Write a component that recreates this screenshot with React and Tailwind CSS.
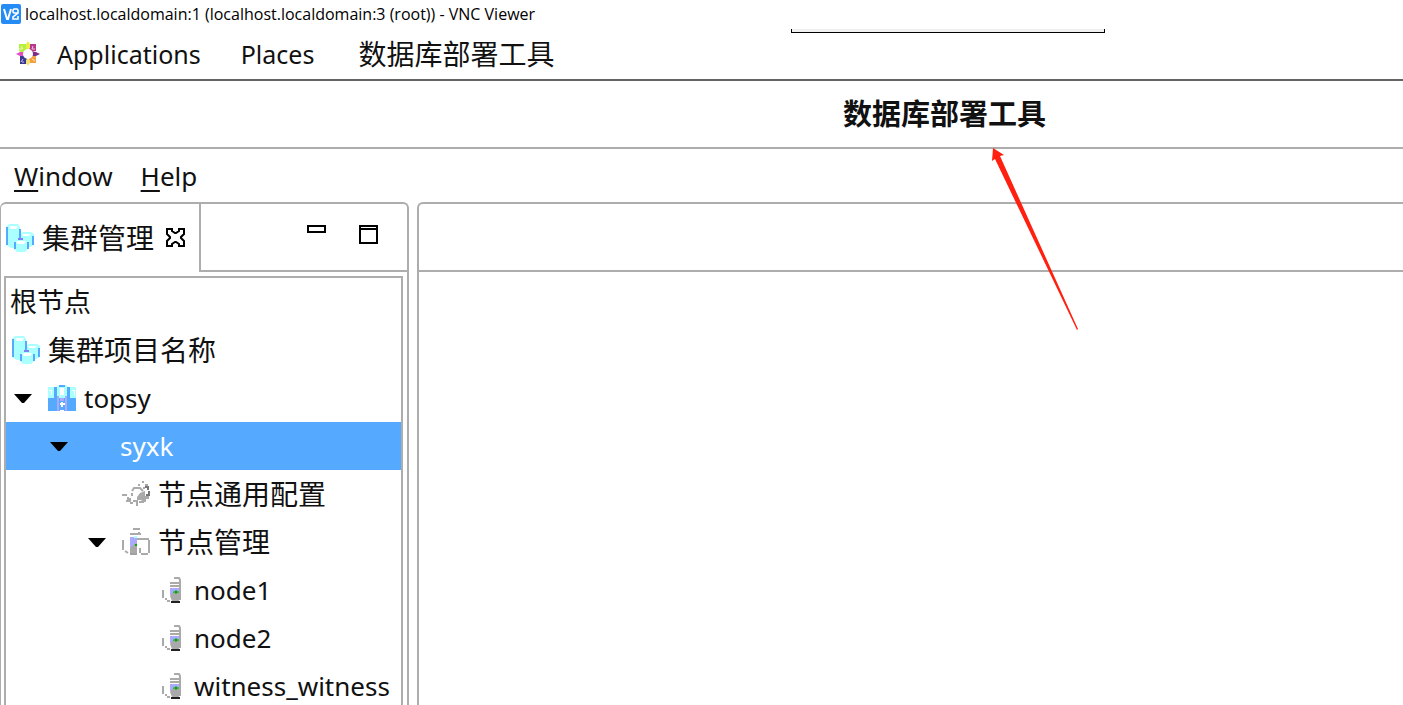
import { useState } from "react";

function VncLogo() {
  return (
    <svg width="20" height="20" viewBox="0 0 20 20" aria-hidden="true">
      <rect width="20" height="20" rx="2" fill="#258cf5" />
      <path d="M3 5l3 10h1l3-10" fill="none" stroke="#fff" strokeWidth="2" />
      <path
        d="M17 9h-4l-1-1V6l1-1h3l1 1v3l-5 4v2h5v-3"
        fill="none"
        stroke="#fff"
        strokeWidth="1.6"
      />
    </svg>
  );
}

function CentosLogo() {
  return (
    <svg width="26" height="26" viewBox="0 0 26 26" aria-hidden="true">
      <path d="M4 3h7l1 5-4 4-4-2z" fill="#b4f03c" />
      <path d="M15 3h6v7l-4 1-4-4z" fill="#b8388c" />
      <path d="M5 15l4-1 4 5-2 4H5z" fill="#3a3a96" />
      <path d="M17 14l4 1v7h-6l-2-4z" fill="#f5a040" />
      <path d="M13 0l2 3v4l-2 2-2-2V3z" fill="#e8f04a" />
      <path d="M25 13l-4 2h-4l-2-2 2-2h4z" fill="#7a3088" />
      <path d="M13 25l-2-3v-3l2-2 2 2v3z" fill="#f8e070" />
      <path d="M1 13l4-2h4l2 2-2 2H5z" fill="#e050c0" />
      <path
        d="M6 5l2 3M4 8h3M18 5l-1 3M20 8h-3M6 21l2-3M20 20l-3-2M8 22v-2"
        stroke="#fff"
        strokeWidth="1"
        opacity="0.7"
      />
      <circle cx="13" cy="13" r="5" fill="#fff" />
    </svg>
  );
}

function ClusterIcon() {
  return (
    <svg width="28" height="30" viewBox="0 0 28 30" aria-hidden="true">
      <path d="M0 4l3-3h9l2 3v18l-5 3H5l-5-3z" fill="#aaffff" />
      <path d="M14 11l3-2h8l3 2v11l-4 2H14z" fill="#aaffff" />
      <path d="M3 4l2-1h6l1 1-2 2H5z" fill="#fff" />
      <path d="M16 11h9l-2 2h-6z" fill="#fff" />
      <path
        d="M1 4v18M14 6v10M27 13v9"
        fill="none"
        stroke="#55aaff"
        strokeWidth="2"
      />
      <path d="M12 16h5" stroke="#8080ff" strokeWidth="2" />
      <path d="M8 17h14v9l-3 3h-8l-3-3z" fill="#aaffff" />
      <path d="M10 19l2-1h7l1 1-2 2h-6z" fill="#fff" />
      <path d="M9 19v7M22 19v7" stroke="#55aaff" strokeWidth="2" />
    </svg>
  );
}

function ProjectIcon() {
  return (
    <svg width="28" height="29" viewBox="0 0 28 29" aria-hidden="true">
      <path d="M0 3h9l2-2h7l2 2h8v12H0z" fill="#aaffff" />
      <path d="M0 14h28v13H0z" fill="#55aaff" />
      <path d="M6 3h3v12H6zM19 3h3v12h-3zM11 1h6v2h-6z" fill="#55aaff" />
      <path d="M9 12h2v15H9zM17 12h2v15h-2zM12 14h4v3h-4z" fill="#aaaaff" />
      <path d="M12 4h4v7h-4zM1 6h3v5H1zM24 6h3v5h-3z" fill="#fff" />
      <path d="M2 7v4M25 7v4" stroke="#aaffff" strokeWidth="2" />
      <path d="M12 20h5M14 18v5M12 27h4" stroke="#fff" strokeWidth="2" />
    </svg>
  );
}

function GearIcon() {
  return (
    <svg width="28" height="26" viewBox="0 0 28 26" aria-hidden="true">
      <path
        d="M0 14h5M10 10l2-3h6l3 3M20 1h2M16 4h2M23 4h3M21 7h2M10 12v3M6 16v3M4 20h4v-3M8 22h3M11 20h4v5M17 21h4v-2"
        fill="none"
        stroke="#aaa"
        strokeWidth="2"
      />
      <path d="M18 12l5-2v5h4v3h-3v3h-3l-2-2h-4v-3z" fill="#aaa" />
      <path d="M23 6h3v3M27 10v4h-3" fill="none" stroke="#777" strokeWidth="2" />
    </svg>
  );
}

function ServersIcon() {
  return (
    <svg width="28" height="28" viewBox="0 0 28 28" aria-hidden="true">
      <path
        d="M11 1h7M17 4v3M8 6h11M1 12v10M3 23l3 2M15 11h12M27 12v13M19 26h7M18 20v5"
        fill="none"
        stroke="#aaa"
        strokeWidth="2"
      />
      <path d="M8 9h7v15H8z" fill="#aaaaff" />
      <path d="M12 8h3v2h-3z" fill="#aaffff" />
      <path d="M8 20l7-6v11H8z" fill="#aaa" />
      <path d="M13 16h2v2h-2z" fill="#0a0" />
      <path d="M8 26h7" stroke="#444" strokeWidth="1" />
    </svg>
  );
}

function NodeIcon() {
  return (
    <svg width="20" height="26" viewBox="0 0 20 26" aria-hidden="true">
      <path
        d="M12 1h5l1 2v20M8 6h9M8 9h9M1 13v8M3 22h2M5 24h3"
        fill="none"
        stroke="#aaa"
        strokeWidth="2"
      />
      <path d="M8 11h9v7H8z" fill="#aaaaff" />
      <path d="M8 19l3-4h6v9h-7z" fill="#aaa" />
      <path d="M14 13v4M11 15h6" stroke="#0a0" strokeWidth="1" />
      <path d="M13 14h2v2h-2z" fill="#0a0" />
      <path d="M9 25h9" stroke="#222" strokeWidth="2" />
    </svg>
  );
}

function ToggleArrow() {
  return (
    <svg width="18" height="10" viewBox="0 0 18 10" aria-hidden="true">
      <path d="M0 1h18l-8 9H8z" fill="#000" />
    </svg>
  );
}

const ROWS = [
  { id: "root", label: "根节点", indent: "pl-1", size: "text-[27px]" },
  {
    id: "project",
    label: "集群项目名称",
    indent: "pl-1.5",
    size: "text-[28px]",
    icon: <ClusterIcon />,
  },
  { id: "topsy", label: "topsy", indent: "pl-2", icon: <ProjectIcon />, open: true },
  {
    id: "syxk",
    label: "syxk",
    indent: "pl-11",
    icon: <span className="w-7" />,
    open: true,
  },
  {
    id: "config",
    label: "节点通用配置",
    indent: "pl-29",
    size: "text-[28px]",
    icon: <GearIcon />,
  },
  {
    id: "nodes",
    label: "节点管理",
    indent: "pl-[82px]",
    size: "text-[28px]",
    icon: <ServersIcon />,
    open: true,
  },
  { id: "node1", label: "node1", indent: "pl-38", icon: <NodeIcon /> },
  { id: "node2", label: "node2", indent: "pl-38", icon: <NodeIcon /> },
  { id: "witness", label: "witness_witness", indent: "pl-38", icon: <NodeIcon /> },
];

function TreeRow({ row, selected, onSelect }) {
  return (
    <li role="treeitem" aria-selected={selected} aria-expanded={row.open}>
      <button
        type="button"
        onClick={() => onSelect(row.id)}
        className={`flex h-12 w-full items-center whitespace-nowrap text-left ${row.indent} ${
          selected ? "bg-[#55aaff] text-white" : ""
        }`}
      >
        {row.open && (
          <span className="flex w-[34px] shrink-0">
            <ToggleArrow />
          </span>
        )}
        {row.icon && (
          <span className="flex min-w-7 shrink-0 items-center justify-center">{row.icon}</span>
        )}
        <span className={`${row.icon ? "pl-2" : ""} ${row.size || "text-[26px]"}`}>
          {row.label}
        </span>
      </button>
    </li>
  );
}

function ClusterPanel() {
  const [selected, setSelected] = useState("syxk");

  return (
    <aside className="flex w-[409px] shrink-0 flex-col rounded-t-md border-2 border-b-0 border-l border-[#adadad]">
      <div className="flex h-17 shrink-0">
        <div className="flex w-[200px] items-center border-r-2 border-[#adadad] pl-[5px]">
          <ClusterIcon />
          <span className="pl-2 text-[28px]">集群管理</span>
          <button type="button" aria-label="Close" className="ml-3">
            <svg width="20" height="20" viewBox="0 0 20 20" aria-hidden="true">
              <path
                d="M1 1h5v2l3 2h1l3-2V1h5v5l-3 3v1l3 3v5h-5v-2l-3-2H9l-3 2v2H1v-5l3-3V9L1 6z"
                fill="none"
                stroke="#000"
                strokeWidth="2"
              />
            </svg>
          </button>
        </div>
        <div className="flex flex-1 items-start justify-end gap-8 border-b-2 border-[#adadad] pt-5 pr-7">
          <button type="button" aria-label="Minimize">
            <svg width="20" height="20" viewBox="0 0 20 20" aria-hidden="true">
              <path d="M1 2h17v6H1z" fill="none" stroke="#000" strokeWidth="2" />
            </svg>
          </button>
          <button type="button" aria-label="Maximize">
            <svg width="20" height="20" viewBox="0 0 20 20" aria-hidden="true">
              <path d="M1 2h17v17H1zM2 5h15" fill="none" stroke="#000" strokeWidth="2" />
            </svg>
          </button>
        </div>
      </div>
      <ul
        role="tree"
        aria-label="集群管理"
        className="mr-1 ml-[3px] mt-1 min-h-0 flex-1 overflow-hidden border-2 border-b-0 border-[#adadad]"
      >
        {ROWS.map((row) => (
          <TreeRow
            key={row.id}
            row={row}
            selected={row.id === selected}
            onSelect={setSelected}
          />
        ))}
      </ul>
    </aside>
  );
}

export default function App() {
  return (
    <div className="relative flex h-screen flex-col overflow-hidden bg-white font-['Noto_Sans','Noto_Sans_CJK_SC',sans-serif] text-[26px] leading-9 text-[#111]">
      <header className="flex h-7 shrink-0 items-center gap-1 pl-px font-['Open_Sans',sans-serif] text-[16px] text-black">
        <VncLogo />
        <h1 className="whitespace-nowrap">
          localhost.localdomain:1 (localhost.localdomain:3 (root)) - VNC Viewer
        </h1>
      </header>

      <div className="absolute top-[29px] left-[791px] h-1 w-[314px] border border-t-0 border-black bg-[#f0f0f0]" />

      <nav className="flex h-[53px] shrink-0 items-center border-b-2 border-[#646464] pl-[15px] text-[25px]">
        <CentosLogo />
        <button type="button" className="ml-4">Applications</button>
        <button type="button" className="ml-10">Places</button>
        <button type="button" className="ml-11 text-[28px]">数据库部署工具</button>
      </nav>

      <div className="flex h-17 shrink-0 items-center justify-center border-b-2 border-[#adadad] pl-[486px]">
        <h2 className="text-[29px] font-bold">数据库部署工具</h2>
      </div>

      <nav className="flex h-[53px] shrink-0 items-center gap-7 pl-[14px]">
        <button type="button">
          <span className="underline decoration-2 underline-offset-4">W</span>indow
        </button>
        <button type="button">
          <span className="underline decoration-2 underline-offset-4">H</span>elp
        </button>
      </nav>

      <div className="flex min-h-0 flex-1 gap-2">
        <ClusterPanel />
        <main className="flex-1 rounded-tl-md border-t-2 border-l-2 border-[#adadad]">
          <div className="h-17 border-b-2 border-[#adadad]" />
        </main>
      </div>

      <svg
        className="pointer-events-none absolute top-[148px] left-[991px]"
        width="88"
        height="183"
        viewBox="0 0 88 183"
        aria-hidden="true"
      >
        <path d="M2 0l11 7-4 1 78 173-1 1L4 11l-3 2z" fill="#ff2010" />
      </svg>
    </div>
  );
}
